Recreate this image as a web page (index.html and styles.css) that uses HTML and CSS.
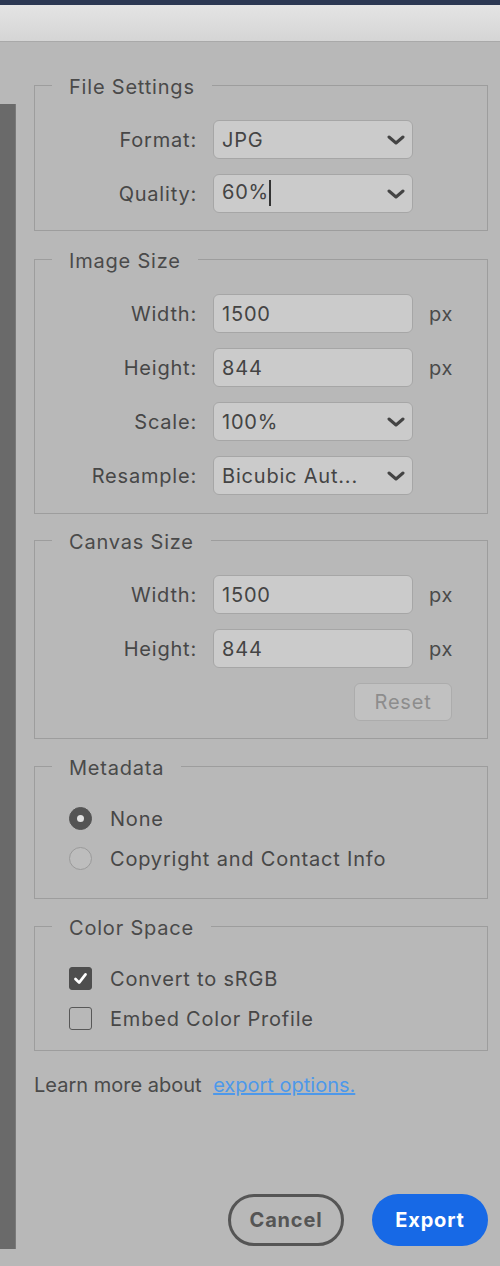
FILE: index.html
```html
<!DOCTYPE html>
<html lang="en">
<head>
<meta charset="utf-8">
<title>Export As</title>
<link rel="stylesheet" href="styles.css">
</head>
<body>
<div class="topstrip"></div>
<div class="titlebar"></div>
<div class="main">
  <div class="preview"></div>
  <div class="panel">
    <fieldset class="group fs-file">
      <legend>File Settings</legend>
      <div class="grid">
        <label class="lbl">Format:</label>
        <div class="field select"><span>JPG</span><svg class="chev" viewBox="0 0 18 10"><path d="M2 2 L9 8 L16 2"/></svg></div>
        <span></span>
        <label class="lbl">Quality:</label>
        <div class="field select"><span>60%<i class="caret"></i></span><svg class="chev" viewBox="0 0 18 10"><path d="M2 2 L9 8 L16 2"/></svg></div>
        <span></span>
      </div>
    </fieldset>

    <fieldset class="group fs-image">
      <legend>Image Size</legend>
      <div class="grid">
        <label class="lbl">Width:</label>
        <div class="field"><span>1500</span></div>
        <span class="unit">px</span>
        <label class="lbl">Height:</label>
        <div class="field"><span>844</span></div>
        <span class="unit">px</span>
        <label class="lbl">Scale:</label>
        <div class="field select"><span>100%</span><svg class="chev" viewBox="0 0 18 10"><path d="M2 2 L9 8 L16 2"/></svg></div>
        <span></span>
        <label class="lbl">Resample:</label>
        <div class="field select"><span>Bicubic Aut...</span><svg class="chev" viewBox="0 0 18 10"><path d="M2 2 L9 8 L16 2"/></svg></div>
        <span></span>
      </div>
    </fieldset>

    <fieldset class="group fs-canvas">
      <legend>Canvas Size</legend>
      <div class="grid">
        <label class="lbl">Width:</label>
        <div class="field"><span>1500</span></div>
        <span class="unit">px</span>
        <label class="lbl">Height:</label>
        <div class="field"><span>844</span></div>
        <span class="unit">px</span>
        <span></span>
        <button class="reset" type="button">Reset</button>
      </div>
    </fieldset>

    <fieldset class="group fs-meta">
      <legend>Metadata</legend>
      <div class="opts">
        <div class="opt"><span class="radio on"></span><span>None</span></div>
        <div class="opt"><span class="radio"></span><span>Copyright and Contact Info</span></div>
      </div>
    </fieldset>

    <fieldset class="group fs-color">
      <legend>Color Space</legend>
      <div class="opts">
        <div class="opt"><span class="check on"><svg viewBox="0 0 23 23"><path d="M6 12 L10 16 L17 7"/></svg></span><span>Convert to sRGB</span></div>
        <div class="opt"><span class="check"></span><span>Embed Color Profile</span></div>
      </div>
    </fieldset>

    <p class="learn">Learn more about <a href="#">export options.</a></p>

    <div class="footer">
      <button class="btn cancel" type="button">Cancel</button>
      <button class="btn export" type="button">Export</button>
    </div>
  </div>
</div>
</body>
</html>
```

FILE: styles.css
```css
* { box-sizing: border-box; }

html, body {
  margin: 0;
  padding: 0;
}

body {
  width: 500px;
  height: 1266px;
  overflow: hidden;
  background: #b8b8b8;
  font-family: Inter, "Noto Sans", "DejaVu Sans", sans-serif;
  font-size: 20px;
  letter-spacing: 0.8px;
  color: #474747;
}

.topstrip {
  height: 5px;
  background: #2c3853;
}

.titlebar {
  height: 37px;
  background: linear-gradient(#e4e4e4, #d5d5d5);
  border-bottom: 1px solid #a9a9a9;
}

.main {
  display: flex;
  height: 1224px;
}

.preview {
  width: 16px;
  flex: none;
  margin-top: 62px;
  height: 1145px;
  background: #6a6a6a;
  border-right: 1px solid #7a7a7a;
}

.panel {
  flex: 1;
  display: flex;
  flex-direction: column;
  padding: 30px 12px 20px 18px;
}

.group {
  margin: 0;
  padding: 0;
  border: 1px solid #9d9d9d;
  min-width: 0;
}

.group legend {
  margin-left: 17px;
  padding: 3px 17px 0;
  line-height: 24px;
  font-size: 20px;
  color: #4a4a4a;
}

.fs-file { padding: 21px 0 17px; }
.fs-image { margin-top: 15px; padding: 21px 0 18px; }
.fs-canvas { margin-top: 13px; padding: 21px 0 17px; }
.fs-meta { margin-top: 14px; padding: 27px 0 28px; }
.fs-color { margin-top: 14px; padding: 27px 0 20px; }

.grid {
  display: grid;
  grid-template-columns: 162px 200px 23px;
  column-gap: 16px;
  row-gap: 15px;
  align-items: center;
}

.lbl {
  text-align: right;
  white-space: nowrap;
}

.field {
  height: 39px;
  background: #cbcbcb;
  border: 1px solid #a6a6a6;
  border-radius: 6px;
  display: flex;
  align-items: center;
  justify-content: space-between;
  padding: 0 7px 0 8px;
  color: #444;
  white-space: nowrap;
}

.caret {
  display: inline-block;
  width: 2px;
  height: 26px;
  background: #333;
  vertical-align: middle;
  position: relative;
  top: -1px;
}

.chev {
  width: 18px;
  height: 10px;
  flex: none;
  fill: none;
  stroke: #444;
  stroke-width: 3;
  stroke-linecap: round;
  stroke-linejoin: round;
}

.unit {
  color: #4a4a4a;
  white-space: nowrap;
}

.reset {
  grid-column: 2 / 4;
  justify-self: end;
  width: 98px;
  height: 38px;
  font: inherit;
  font-size: 20px;
  letter-spacing: 0.8px;
  color: #8d8d8d;
  background: #c1c1c1;
  border: 1px solid #acacac;
  border-radius: 6px;
  padding: 0;
}

.opts {
  display: flex;
  flex-direction: column;
  gap: 17px;
  padding-left: 34px;
}

.opt {
  display: flex;
  align-items: center;
  gap: 18px;
  height: 23px;
}

.radio {
  width: 23px;
  height: 23px;
  border-radius: 50%;
  border: 1px solid #9a9a9a;
  background: #bdbdbd;
  flex: none;
  position: relative;
}

.radio.on {
  background: #545454;
  border-color: #545454;
}

.radio.on::after {
  content: "";
  position: absolute;
  left: 7px;
  top: 7px;
  width: 7px;
  height: 7px;
  border-radius: 50%;
  background: #e0e0e0;
}

.check {
  width: 23px;
  height: 23px;
  border-radius: 3px;
  border: 1.5px solid #585858;
  flex: none;
  display: flex;
}

.check.on {
  background: #4e4e4e;
  border-color: #4e4e4e;
}

.check svg {
  width: 100%;
  height: 100%;
  fill: none;
  stroke: #fff;
  stroke-width: 3;
  stroke-linecap: round;
  stroke-linejoin: round;
}

.learn {
  margin: 22px 0 0;
  line-height: 24px;
  font-size: 20px;
  letter-spacing: 0;
  color: #4a4a4a;
}

.learn a {
  color: #4d98ea;
  text-decoration: underline;
  margin-left: 6px;
}

.footer {
  margin-top: auto;
  display: flex;
  justify-content: flex-end;
  gap: 28px;
}

.btn {
  height: 52px;
  border-radius: 26px;
  font: inherit;
  font-weight: 700;
  font-size: 20px;
  letter-spacing: 0.8px;
  padding: 0;
}

.cancel {
  width: 116px;
  background: transparent;
  border: 3px solid #555;
  color: #555;
}

.export {
  width: 116px;
  background: #1769e6;
  border: none;
  color: #fff;
}
```
